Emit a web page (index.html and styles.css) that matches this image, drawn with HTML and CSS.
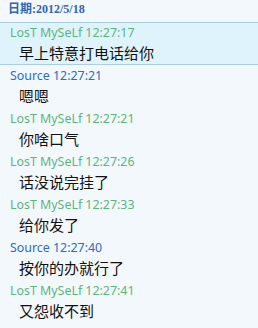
FILE: index.html
```html
<!DOCTYPE html>
<html lang="zh-CN">
<head>
    <meta charset="UTF-8">
    <meta name="viewport" content="width=device-width, initial-scale=1.0">
    <title>聊天记录</title>
    <link rel="stylesheet" href="styles.css">
</head>
<body>
    <div class="date">日期:2012/5/18</div>
    <div class="log">
        <div class="msg msg--active">
            <div class="msg__head me">LosT MySeLf 12:27:17</div>
            <div class="msg__text">早上特意打电话给你</div>
        </div>
        <div class="msg">
            <div class="msg__head other">Source 12:27:21</div>
            <div class="msg__text">嗯嗯</div>
        </div>
        <div class="msg">
            <div class="msg__head me">LosT MySeLf 12:27:21</div>
            <div class="msg__text">你啥口气</div>
        </div>
        <div class="msg">
            <div class="msg__head me">LosT MySeLf 12:27:26</div>
            <div class="msg__text">话没说完挂了</div>
        </div>
        <div class="msg">
            <div class="msg__head me">LosT MySeLf 12:27:33</div>
            <div class="msg__text">给你发了</div>
        </div>
        <div class="msg">
            <div class="msg__head other">Source 12:27:40</div>
            <div class="msg__text">按你的办就行了</div>
        </div>
        <div class="msg">
            <div class="msg__head me">LosT MySeLf 12:27:41</div>
            <div class="msg__text">又怨收不到</div>
        </div>
    </div>
</body>
</html>
```

FILE: styles.css
```css
* {
    box-sizing: border-box;
    margin: 0px;
    padding: 0px;
}
body {
    background-color: #f3f8fc;
    font-family: "Noto Sans", "Noto Sans CJK SC", sans-serif;
    overflow: hidden;
}
.date {
    height: 22px;
    line-height: 18px;
    padding-left: 8px;
    font-family: "Liberation Serif", "Noto Sans CJK SC", serif;
    font-weight: bold;
    font-size: 12px;
    color: #3465b0;
}
.msg {
    height: 43px;
    border-top: 1px solid transparent;
    border-bottom: 1px solid transparent;
}
.msg--active {
    background-color: #dff3fc;
    border-top-color: #a9cfe8;
    border-bottom-color: #a9cfe8;
}
.msg__head {
    height: 19px;
    line-height: 20px;
    padding-left: 10px;
    font-size: 12.4px;
}
.me {
    color: #5bb67c;
}
.other {
    color: #2b6cc4;
}
.msg__text {
    height: 22px;
    line-height: 22px;
    padding-left: 19px;
    font-family: "Noto Sans CJK SC", sans-serif;
    font-size: 15px;
    color: #111;
}
```
